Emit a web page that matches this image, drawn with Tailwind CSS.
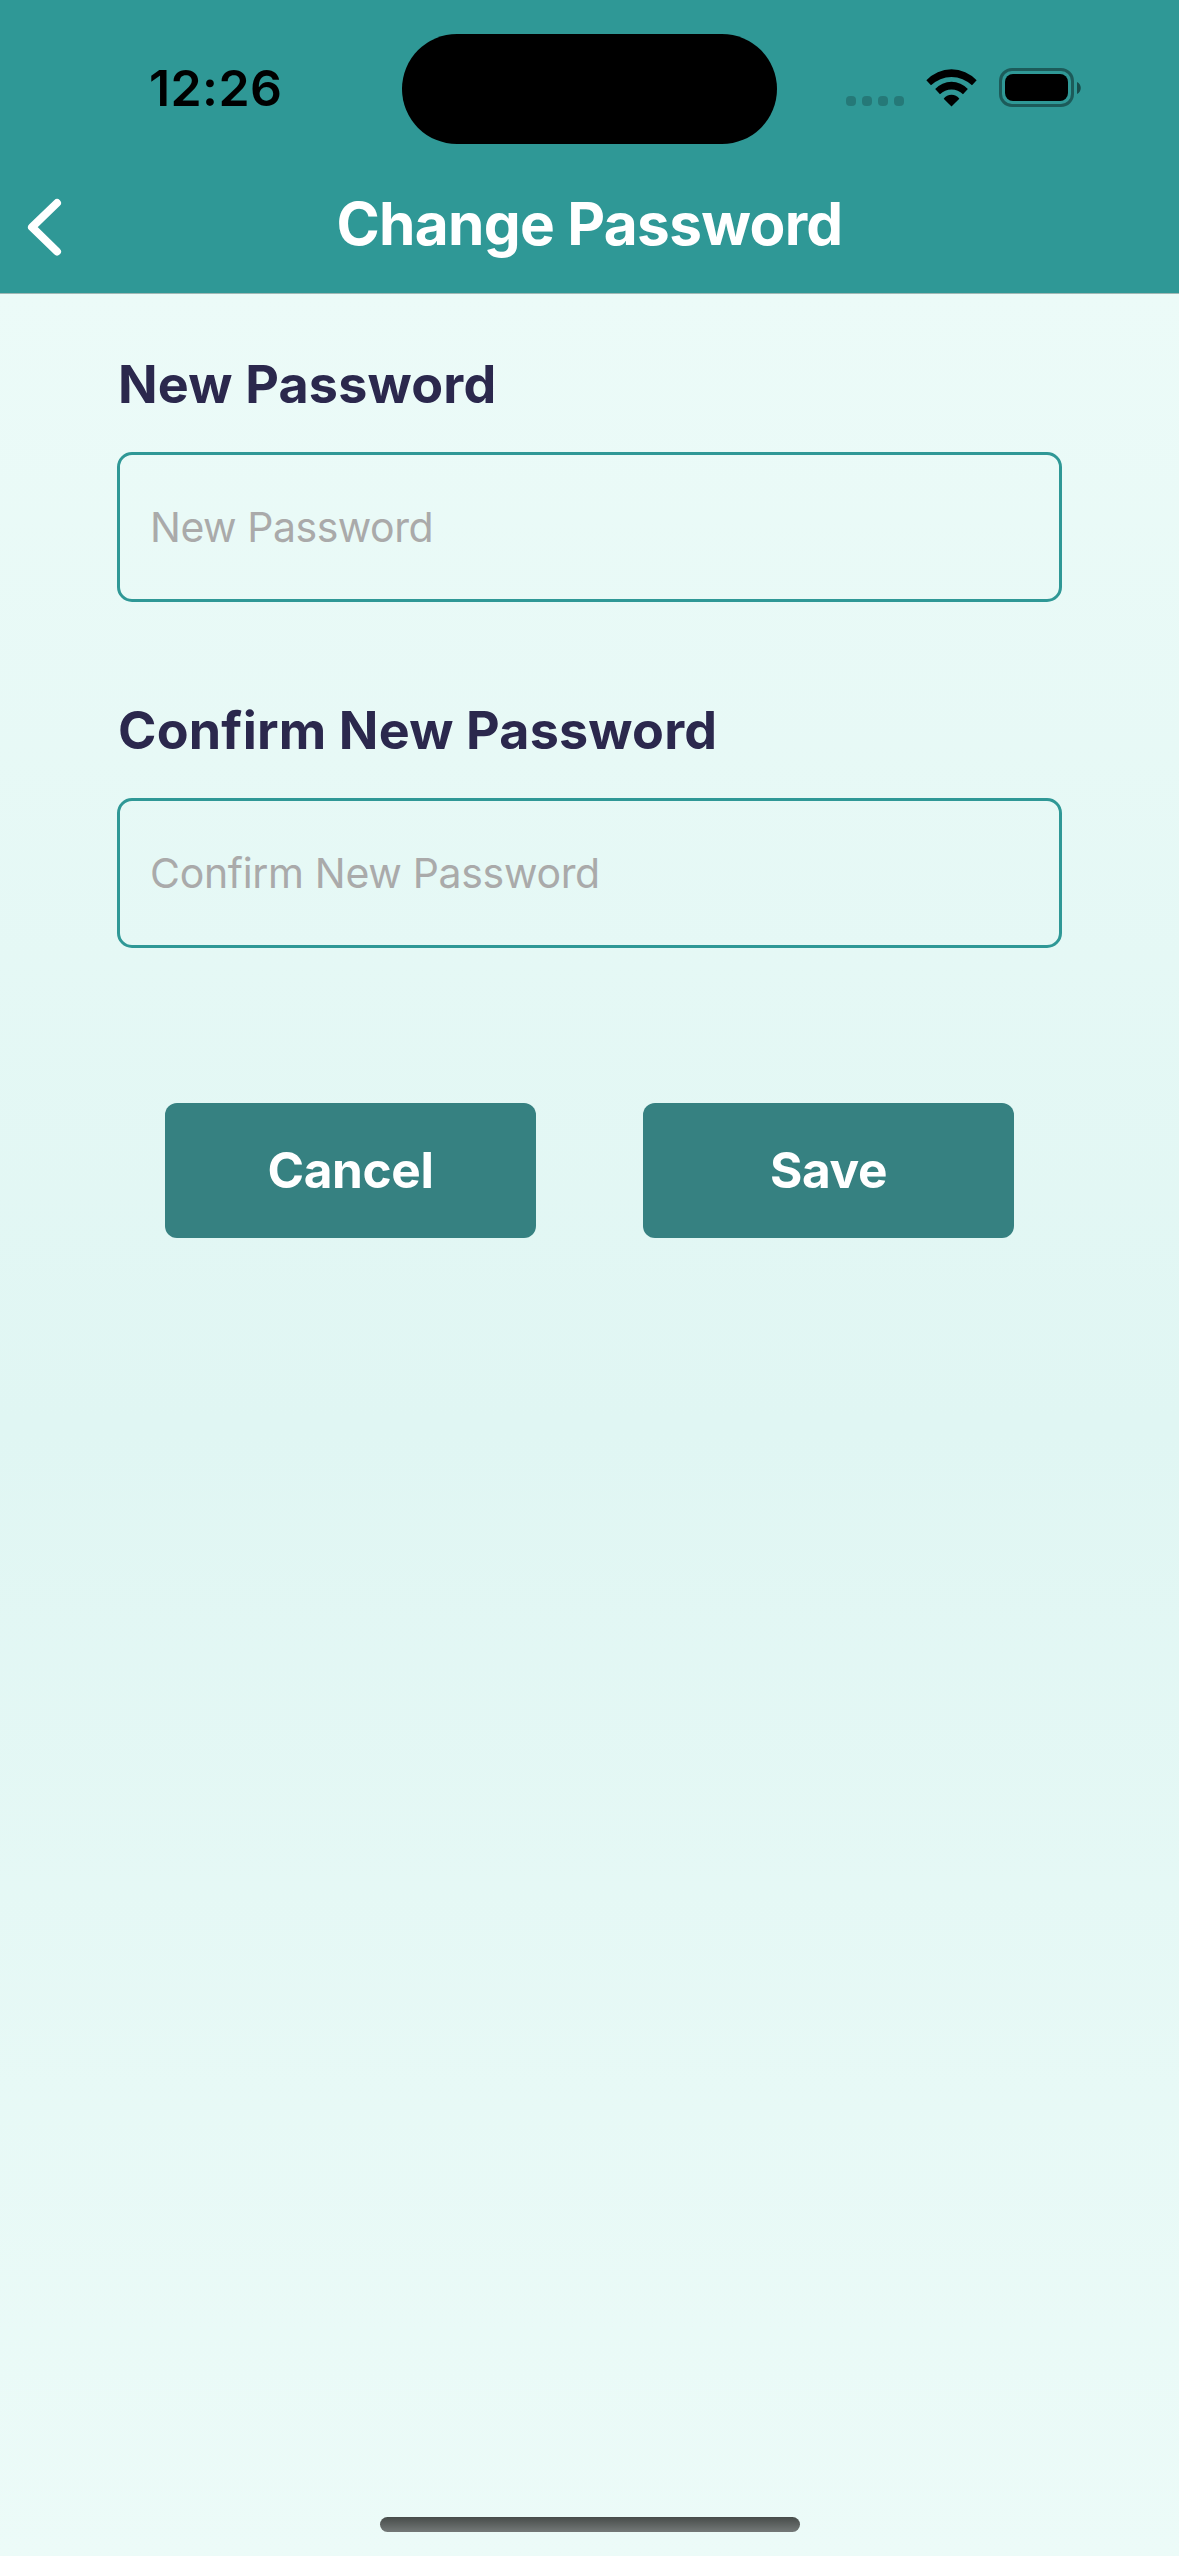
<!DOCTYPE html>
<html lang="en">
<head>
<meta charset="utf-8">
<title>Change Password</title>
<script src="https://cdn.jsdelivr.net/npm/@tailwindcss/browser@4"></script>
</head>
<body class="font-[Inter,sans-serif]">
<div class="flex h-[2556px] w-[1179px] flex-col overflow-hidden bg-[#ecfbf8]">
  <header class="h-[294px] shrink-0 border-b border-[#a1b8b5] bg-[#2f9896]">
    <!-- Status bar -->
    <div class="flex h-[158px] items-start pt-[33px]">
      <div class="flex h-[110px] w-[402px] items-center pl-[149px] text-[50px] leading-none font-semibold tracking-[0.4px] text-black">12:26</div>
      <div class="mt-px h-[110px] w-[375px] rounded-full bg-black"></div>
      <div class="flex h-[109px] items-center pl-[69px]">
        <div class="flex gap-[6px] pt-[27px]">
          <span class="size-[10px] rounded-[4px] bg-black/20"></span>
          <span class="size-[10px] rounded-[4px] bg-black/20"></span>
          <span class="size-[10px] rounded-[4px] bg-black/20"></span>
          <span class="size-[10px] rounded-[4px] bg-black/20"></span>
        </div>
        <svg class="ml-[22px] h-[38px] w-[51px]" viewBox="318 86 153 114">
          <path d="M319 120A102.9 102.9 0 0 1 470 120L456 135A88 88 0 0 0 333 135Z"/>
          <path d="M345.500 146A66.500 66.500 0 0 1 443.500 146L429 161.500A49.500 49.500 0 0 0 360 161.500Z"/>
          <path d="M371 175A29 29 0 0 1 418 175L394.500 198.500Z"/>
        </svg>
        <div class="ml-[22px] h-[39px] w-[75px] rounded-[13px] border-3 border-black/40 p-[3px]">
          <div class="h-[27px] w-[63px] rounded-[8px] bg-black"></div>
        </div>
        <svg class="ml-[3px] h-[12px] w-[4px]" viewBox="0 0 4 12"><path d="M0 0C5 2 5 10 0 12Z" class="fill-black/50"/></svg>
      </div>
    </div>
    <!-- Navigation bar -->
    <div class="grid h-[132px] grid-cols-[120px_1fr_120px] items-center">
      <svg class="mt-[5px] ml-[24px] h-[66px] w-[42px]" viewBox="24 193.500 42 66" fill="none" stroke="#fff" stroke-width="8" stroke-linecap="round" stroke-linejoin="round"><path d="M57 202.500L32 226.700L57 251"/></svg>
      <h1 class="text-center text-[58.5px] leading-none font-bold tracking-[-0.69px] text-white">Change Password</h1>
    </div>
  </header>
  <main class="flex flex-1 flex-col bg-linear-to-b from-[#ecfbf8] via-[#e0f6f3] to-[#ecfbf8] px-[117px] pt-[59px]">
    <label class="pl-px text-[52px] leading-[64px] font-bold tracking-[0.2px] text-[#2b284d]">New Password</label>
    <div class="mt-[35px] flex h-[150px] items-center rounded-[15px] border-3 border-[#2f9896] pt-[2px] pl-[30px] text-[41px] tracking-[-0.48px] text-[#aaaaaa]">New Password</div>
    <label class="mt-[97px] pl-px text-[52px] leading-[64px] font-bold tracking-[0.2px] text-[#2b284d]">Confirm New Password</label>
    <div class="mt-[35px] flex h-[150px] items-center rounded-[15px] border-3 border-[#2f9896] pt-[2px] pl-[30px] text-[41px] tracking-[-0.32px] text-[#aaaaaa]">Confirm New Password</div>
    <div class="mt-[155px] flex gap-[107px] px-[48px]">
      <button class="h-[135px] w-[371px] rounded-[12px] bg-[#368181] text-[49.5px] font-bold tracking-[-0.35px] text-white">Cancel</button>
      <button class="h-[135px] w-[371px] rounded-[12px] bg-[#368181] text-[49.5px] font-bold tracking-[-0.35px] text-white">Save</button>
    </div>
    <!-- Home indicator -->
    <div class="mt-auto mb-[24px] h-[15px] w-[420px] self-center rounded-full bg-linear-to-b from-[#474c4a] to-[#747978]"></div>
  </main>
</div>
</body>
</html>
